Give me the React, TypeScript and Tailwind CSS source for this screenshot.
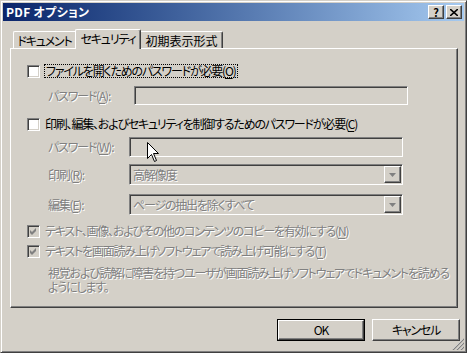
import React from 'react';

const font = 'font-["MS_UI_Gothic","Noto_Sans_CJK_JP",sans-serif] [font-feature-settings:"palt"]';

const disabledText = 'text-[#808080] [text-shadow:1px_1px_0_#ffffff]';

const sunken =
  'border border-t-[#808080] border-l-[#808080] border-r-white border-b-white shadow-[inset_1px_1px_0_#404040,inset_-1px_-1px_0_#d4d0c8]';

const raised =
  'border border-t-white border-l-white border-r-[#404040] border-b-[#404040] shadow-[inset_-1px_-1px_0_#808080]';

function Checkbox({ checked, disabled }: { checked?: boolean; disabled?: boolean }): React.ReactElement {
  return (
    <div
      className={`w-[13px] h-[13px] shrink-0 flex items-center justify-center ${sunken} ${
        disabled ? 'bg-[#d4d0c8]' : 'bg-white'
      }`}
    >
      {checked && (
        <svg width="7" height="7" viewBox="0 0 7 7">
          <path d="M0 2 L2 4 L6 0 L6 3 L2 7 L0 5 Z" fill={disabled ? '#808080' : '#000'} />
        </svg>
      )}
    </div>
  );
}

function Mn({ c }: { c: string }): React.ReactElement {
  return (
    <>
      (<span className="underline underline-offset-2">{c}</span>)
    </>
  );
}

function DropArrow(): React.ReactElement {
  return (
    <div className={`w-[17px] h-[17px] bg-[#d4d0c8] flex items-center justify-center ${raised}`}>
      <svg width="7" height="4" viewBox="0 0 7 4">
        <path d="M0 0 H7 L3.5 4 Z" fill="#808080" />
      </svg>
    </div>
  );
}

export default function App(): React.ReactElement {
  return (
    <div
      className={`relative w-[467px] h-[353px] overflow-hidden bg-[#d4d0c8] border border-t-[#d4d0c8] border-l-[#d4d0c8] border-r-[#404040] border-b-[#404040] shadow-[inset_1px_1px_0_#fff,inset_-1px_-1px_0_#808080] p-[2px] flex flex-col text-[12px] leading-[14px] tracking-[-1.2px] text-black ${font}`}
    >
      {/* Title bar */}
      <div className="h-[18px] bg-linear-to-r from-[#0a246a] to-[#a6caf0] flex items-center pl-[3px] pr-[2px]">
        <span className="text-white font-bold text-[12px] flex-1 tracking-[0.3px]">PDF オプション</span>
        <div className="flex gap-[2px] tracking-normal">
          <div className={`w-[16px] h-[14px] bg-[#d4d0c8] flex items-center justify-center text-[11px] font-bold leading-none ${raised}`}>
            ?
          </div>
          <div className={`w-[16px] h-[14px] bg-[#d4d0c8] flex items-center justify-center ${raised}`}>
            <svg width="8" height="7" viewBox="0 0 8 7">
              <path d="M0 0 L8 7 M8 0 L0 7" stroke="#000" strokeWidth="1.6" />
            </svg>
          </div>
        </div>
      </div>

      {/* Tabs */}
      <div className="relative z-10 mt-[8px] ml-[10px] h-[19px] flex items-end">
        <div className="w-[62px] h-[17px] border-l border-t border-white rounded-tl-[2px] flex items-center justify-center pt-[1px] whitespace-nowrap">
          ドキュメント
        </div>
        <div className="w-[66px] h-[20px] -mb-[1px] bg-[#d4d0c8] border-l border-t border-r border-white border-r-[#404040] rounded-t-[2px] shadow-[inset_-1px_0_0_#808080] flex items-center justify-center pb-[2px] whitespace-nowrap">
          セキュリティ
        </div>
        <div className="w-[82px] h-[17px] border-t border-r border-white border-r-[#404040] rounded-tr-[2px] shadow-[inset_-1px_0_0_#808080] flex items-center justify-center pt-[1px] whitespace-nowrap tracking-[0px]">
          初期表示形式
        </div>
      </div>

      {/* Panel */}
      <div className="ml-[7px] w-[448px] h-[260px] border border-t-white border-l-white border-r-[#404040] border-b-[#404040] shadow-[inset_-1px_-1px_0_#808080] pt-[15px] pl-[16px] flex flex-col">
        <div className="h-[14px] flex items-center">
          <Checkbox />
          <span className="ml-[4px] border border-dotted border-black px-[1px] h-[14px] flex items-center whitespace-nowrap">
            ファイルを開くためのパスワードが必要<Mn c="O" />
          </span>
        </div>

        <div className="mt-[8px] h-[19px] flex items-center pl-[21px]">
          <span className={`w-[86px] whitespace-nowrap ${disabledText}`}>
            パスワード<Mn c="A" />:
          </span>
          <div className={`w-[274px] h-[19px] bg-[#d4d0c8] ${sunken}`} />
        </div>

        <div className="mt-[12px] h-[14px] flex items-center">
          <Checkbox />
          <span className="ml-[5px] whitespace-nowrap">
            印刷、編集、およびセキュリティを制御するためのパスワードが必要<Mn c="C" />
          </span>
        </div>

        <div className="mt-[6px] h-[20px] flex items-center pl-[21px]">
          <span className={`w-[81px] whitespace-nowrap ${disabledText}`}>
            パスワード<Mn c="W" />:
          </span>
          <div className={`w-[274px] h-[20px] bg-[#d4d0c8] ${sunken}`} />
        </div>

        <div className="mt-[7px] h-[21px] flex items-center pl-[21px]">
          <span className={`w-[81px] whitespace-nowrap ${disabledText}`}>
            印刷<Mn c="R" />:
          </span>
          <div className={`w-[274px] h-[21px] bg-[#d4d0c8] flex items-center pl-[3px] pr-[1px] ${sunken}`}>
            <span className={`flex-1 ${disabledText}`}>高解像度</span>
            <DropArrow />
          </div>
        </div>

        <div className="mt-[9px] h-[21px] flex items-center pl-[21px]">
          <span className={`w-[81px] whitespace-nowrap ${disabledText}`}>
            編集<Mn c="E" />:
          </span>
          <div className={`w-[274px] h-[21px] bg-[#d4d0c8] flex items-center pl-[3px] pr-[1px] ${sunken}`}>
            <span className={`flex-1 whitespace-nowrap ${disabledText}`}>ページの抽出を除くすべて</span>
            <DropArrow />
          </div>
        </div>

        <div className="mt-[9px] h-[14px] flex items-center">
          <Checkbox checked disabled />
          <span className={`ml-[5px] whitespace-nowrap ${disabledText}`}>
            テキスト、画像、およびその他のコンテンツのコピーを有効にする<Mn c="N" />
          </span>
        </div>

        <div className="mt-[6px] h-[14px] flex items-center">
          <Checkbox checked disabled />
          <span className={`ml-[5px] whitespace-nowrap ${disabledText}`}>
            テキストを画面読み上げソフトウェアで読み上げ可能にする<Mn c="T" />
          </span>
        </div>

        <div className={`mt-[8px] pl-[21px] flex flex-col whitespace-nowrap ${disabledText}`}>
          <span className="h-[14px]">
            視覚および読解に障害を持つユーザが画面読み上げソフトウェアでドキュメントを読める
          </span>
          <span className="h-[14px]">ようにします。</span>
        </div>
      </div>

      {/* Buttons */}
      <div className="mt-[11px] flex justify-end gap-[7px] pr-[4px]">
        <div className="w-[88px] h-[22px] border border-black flex">
          <div className={`flex-1 bg-[#d4d0c8] flex items-center justify-center ${raised}`}>OK</div>
        </div>
        <div className={`w-[88px] h-[22px] bg-[#d4d0c8] flex items-center justify-center ${raised}`}>
          キャンセル
        </div>
      </div>

      {/* Size grip */}
      <svg className="absolute right-[2px] bottom-[2px]" width="12" height="12" viewBox="0 0 12 12">
        <path d="M11 1 L1 11 M11 5 L5 11 M11 9 L9 11" stroke="#fff" strokeWidth="1" />
        <path d="M12 1 L1 12 M12 5 L5 12 M12 9 L9 12" stroke="#808080" strokeWidth="1.2" />
      </svg>

      {/* Mouse pointer */}
      <svg className="absolute left-[146px] top-[141px]" width="13" height="21" viewBox="0 0 13 21">
        <path
          d="M0.5 0.5 L0.5 16.5 L4.5 12.5 L7.5 19.5 L9.5 18.5 L6.5 11.5 L11.5 11.5 Z"
          fill="#fff"
          stroke="#000"
          strokeWidth="1"
        />
      </svg>
    </div>
  );
}
